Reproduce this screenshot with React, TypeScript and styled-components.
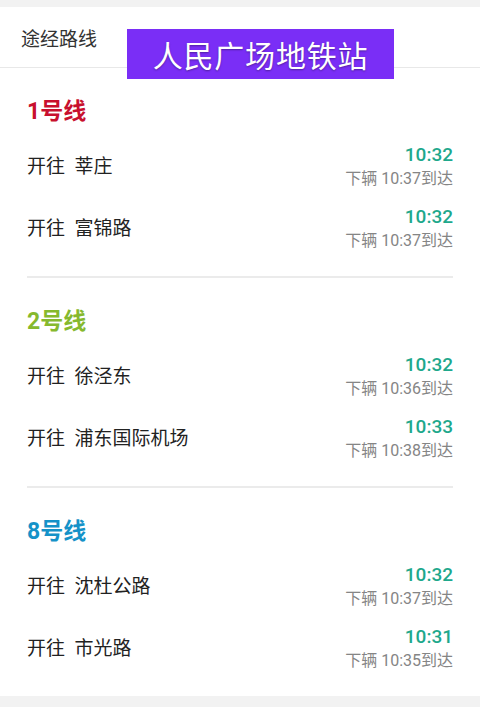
import React from 'react'
import styled, { createGlobalStyle } from 'styled-components'

const GlobalStyle = createGlobalStyle`
  html, body {
    margin: 0;
    padding: 0;
    background: #f2f2f2;
    font-family: Roboto, 'Noto Sans CJK SC', sans-serif;
  }
`

const Page = styled.div`
  position: relative;
  width: 480px;
  height: 707px;
  padding: 7px 0 11px;
  box-sizing: border-box;
`
const Card = styled.div`
  background: #fff;
`
const Header = styled.div`
  height: 60px;
  display: flex;
  align-items: center;
  padding: 0 21px;
  border-bottom: 1px solid #e8e8e8;
  font-size: 19px;
  color: #333;
`
const Banner = styled.div`
  position: absolute;
  left: 127px;
  top: 29px;
  width: 267px;
  height: 50px;
  background: #7a2ef6;
  color: #fff;
  font-size: 30px;
  display: flex;
  align-items: center;
  justify-content: center;
  text-shadow: 0 1px 2px rgba(0, 0, 0, 0.35);
  letter-spacing: 0.8px;
`
const Section = styled.section<{ $last?: boolean }>`
  margin: 0 27px;
  padding: 29px 0 19px;
  border-bottom: ${p => (p.$last ? 'none' : '2px solid #ebebeb')};
`
const LineTitle = styled.h2<{ $color: string }>`
  margin: 0 0 6px;
  height: 30px;
  line-height: 30px;
  font-size: 23px;
  font-weight: bold;
  color: ${p => p.$color};
`
const Row = styled.div`
  height: 62px;
  display: flex;
  align-items: center;
  justify-content: space-between;
`
const Dest = styled.div`
  font-size: 19px;
  color: #222;
`
const TimeCol = styled.div`
  display: flex;
  flex-direction: column;
  align-items: flex-end;
  padding-top: 4px;
`
const Time = styled.div`
  font-size: 19px;
  line-height: 22px;
  font-weight: 500;
  color: #1ea88c;
`
const Next = styled.div`
  margin-top: 3px;
  font-size: 16px;
  line-height: 20px;
  color: #858585;
`

type Train = { to: string; time: string; next: string }
type Line = { name: string; color: string; trains: Train[] }

const lines: Line[] = [
  {
    name: '1号线',
    color: '#c8102e',
    trains: [
      { to: '莘庄', time: '10:32', next: '10:37' },
      { to: '富锦路', time: '10:32', next: '10:37' }
    ]
  },
  {
    name: '2号线',
    color: '#86b92e',
    trains: [
      { to: '徐泾东', time: '10:32', next: '10:36' },
      { to: '浦东国际机场', time: '10:33', next: '10:38' }
    ]
  },
  {
    name: '8号线',
    color: '#1592c8',
    trains: [
      { to: '沈杜公路', time: '10:32', next: '10:37' },
      { to: '市光路', time: '10:31', next: '10:35' }
    ]
  }
]

export default function App() {
  return (
    <Page>
      <GlobalStyle />
      <Card>
        <Header>途经路线</Header>
        {lines.map((line, i) => (
          <Section key={line.name} $last={i === lines.length - 1}>
            <LineTitle $color={line.color}>{line.name}</LineTitle>
            {line.trains.map(t => (
              <Row key={t.to}>
                <Dest>开往&nbsp;&nbsp;{t.to}</Dest>
                <TimeCol>
                  <Time>{t.time}</Time>
                  <Next>下辆 {t.next}到达</Next>
                </TimeCol>
              </Row>
            ))}
          </Section>
        ))}
      </Card>
      <Banner>人民广场地铁站</Banner>
    </Page>
  )
}
